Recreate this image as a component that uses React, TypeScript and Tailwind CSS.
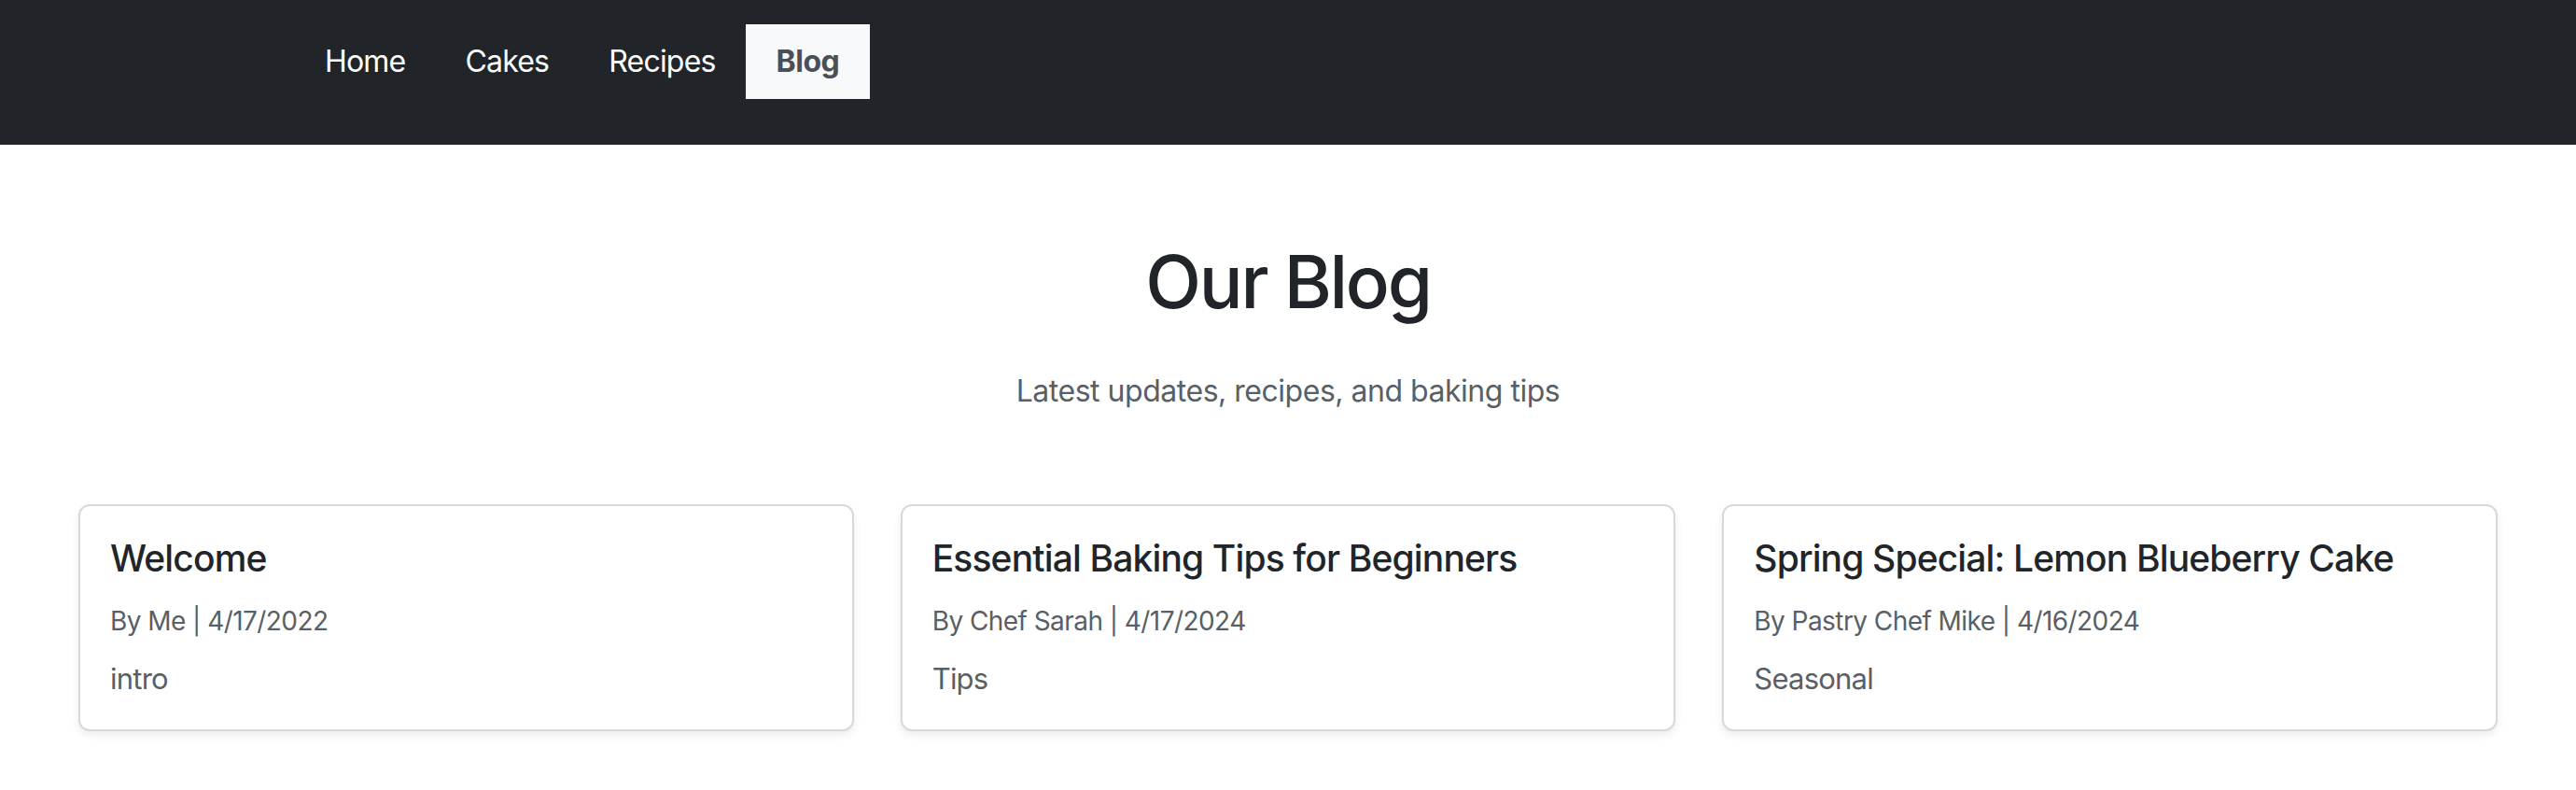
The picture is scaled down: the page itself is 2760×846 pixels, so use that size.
import React from "react";

const posts = [
  { title: "Welcome", author: "Me", date: "4/17/2022", tag: "intro" },
  { title: "Essential Baking Tips for Beginners", author: "Chef Sarah", date: "4/17/2024", tag: "Tips" },
  { title: "Spring Special: Lemon Blueberry Cake", author: "Pastry Chef Mike", date: "4/16/2024", tag: "Seasonal" },
];

export default function App() {
  return (
    <div className="min-h-screen bg-white font-['Inter','Noto_Sans',sans-serif] text-[#212529]">
      <nav className="h-[155px] bg-[#212529] pt-[26px] pl-[316px]">
        <ul className="flex items-start">
          {["Home", "Cakes", "Recipes"].map((l) => (
            <li key={l}>
              <a className="block px-[32px] py-[16px] text-[32px] leading-[48px] tracking-[-0.025em] text-white">{l}</a>
            </li>
          ))}
          <li>
            <a className="block bg-[#f8f9fa] px-[33px] py-[16px] text-[32px] leading-[48px] tracking-[-0.015em] font-bold text-[#495057]">Blog</a>
          </li>
        </ul>
      </nav>
      <main className="px-[84px]">
        <h1 className="mt-[99px] text-center text-[78px] leading-[96px] tracking-[-0.03em] font-medium text-[#212529]">Our Blog</h1>
        <p className="mt-[42px] text-center text-[32px] leading-[54px] tracking-[-0.015em] text-[#595f66]">
          Latest updates, recipes, and baking tips
        </p>
        <div className="mt-[94px] grid grid-cols-3 gap-[50px]">
          {posts.map((p) => (
            <div
              key={p.title}
              className="rounded-[12px] border-2 border-[#d9d9d9] bg-white px-[32px] pt-[32px] pb-[30px] shadow-[0_4px_8px_rgba(0,0,0,0.08)]"
            >
              <h5 className="text-[39px] leading-[48px] tracking-[-0.022em] font-medium text-[#212529]">{p.title}</h5>
              <p className="mt-[22px] text-[28px] leading-[42px] tracking-[-0.02em] text-[#595f66]">
                By {p.author} | {p.date}
              </p>
              <p className="mt-[17px] text-[31px] leading-[48px] tracking-[-0.025em] text-[#595f66]">{p.tag}</p>
            </div>
          ))}
        </div>
      </main>
    </div>
  );
}
